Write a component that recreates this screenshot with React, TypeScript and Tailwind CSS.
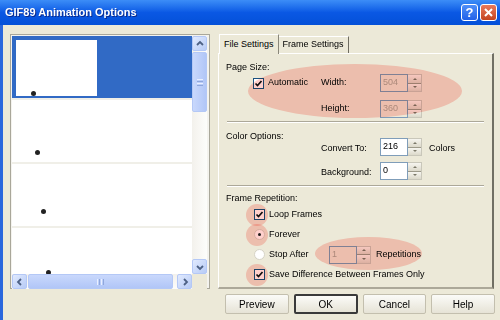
import React from "react";

const Arrow = ({ dir, color = "#4d6185" }: { dir: "up" | "down" | "left" | "right"; color?: string }) => {
  const d = {
    up: "M2 6 L5 3 L8 6",
    down: "M2 4 L5 7 L8 4",
    left: "M6 2 L3 5 L6 8",
    right: "M4 2 L7 5 L4 8",
  }[dir];
  return (
    <svg width="10" height="10" viewBox="0 0 10 10">
      <path d={d} fill="none" stroke={color} strokeWidth="1.8" />
    </svg>
  );
};

const ScrollBtn = ({ dir }: { dir: "up" | "down" | "left" | "right" }) => (
  <div className="flex h-[15px] w-[15px] items-center justify-center rounded-[2px] border border-[#b4c8f6] bg-gradient-to-br from-[#e1eafe] to-[#b7cbf6]">
    <Arrow dir={dir} />
  </div>
);

const SpinBox = ({ value, disabled }: { value: string; disabled?: boolean }) => (
  <div className="flex h-[18px]">
    <div
      className={`w-[28px] border border-[#7f9db9] px-[2px] leading-[15px] ${
        disabled ? "bg-[#ece9d8] text-[#aca899]" : "bg-white text-black"
      }`}
    >
      {value}
    </div>
    <div className="flex w-[14px] flex-col border-y border-r border-[#c9c7ba]">
      <div className="flex flex-1 items-center justify-center border-b border-[#9d9a8a] bg-gradient-to-b from-[#f6f5ef] to-[#dcd9ca]">
        <div className="h-0 w-0 border-x-[2px] border-b-[2px] border-x-transparent border-b-[#7b7868]" />
      </div>
      <div className="flex flex-1 items-center justify-center bg-gradient-to-b from-[#f6f5ef] to-[#dcd9ca]">
        <div className="h-0 w-0 border-x-[2px] border-t-[2px] border-x-transparent border-t-[#7b7868]" />
      </div>
    </div>
  </div>
);

const Check = ({ label }: { label: string }) => (
  <div className="flex h-[13px] items-center gap-[4px]">
    <div className="flex h-[11px] w-[11px] items-center justify-center border border-[#1c5180] bg-white">
      <svg width="9" height="9" viewBox="0 0 9 9">
        <path d="M1.5 4.5 L3.5 6.5 L7.5 2" fill="none" stroke="#111" strokeWidth="1.7" />
      </svg>
    </div>
    <span>{label}</span>
  </div>
);

const Radio = ({ label, on }: { label: string; on?: boolean }) => (
  <div className="flex h-[13px] items-center gap-[4px]">
    <div className="flex h-[11px] w-[11px] items-center justify-center rounded-full border border-[#d6d3c6] bg-white">
      {on && <div className="h-[3px] w-[3px] rounded-full bg-[#222]" />}
    </div>
    <span>{label}</span>
  </div>
);

const Sep = () => <div className="mx-[8px] h-[2px] border-t border-b border-t-[#aca899] border-b-white" />;

const frames = [
  { sel: true, x: 17, y: 53 },
  { sel: false, x: 21, y: 48 },
  { sel: false, x: 27, y: 43 },
  { sel: false, x: 32, y: 40 },
];

const Btn = ({ label, def }: { label: string; def?: boolean }) => (
  <button
    className={`h-[20px] w-[64px] rounded-[2px] bg-gradient-to-b from-[#fbfbf8] to-[#e6e3d6] ${
      def ? "border-2 border-[#3a3a3a]" : "border border-[#c3bfae]"
    }`}
  >
    {label}
  </button>
);

export default function App() {
  return (
    <div
      className="relative h-[320px] w-[500px] overflow-hidden bg-[#ece9d8] text-[9px] text-black"
      style={{ fontFamily: '"Liberation Sans", Arial, sans-serif' }}
    >
      {/* title bar */}
      <div className="flex h-[25px] items-center justify-between bg-gradient-to-b from-[#3c8df7] via-[#0a58e4] to-[#0450d8] pl-[5px] pr-[3px]">
        <span className="text-[11px] font-bold text-white [text-shadow:1px_1px_0_#0a2a8c]">
          GIF89 Animation Options
        </span>
        <div className="flex gap-[2px]">
          <div className="flex h-[17px] w-[17px] items-center justify-center rounded-[3px] border border-white bg-gradient-to-b from-[#4f8ff8] to-[#2160e8] text-[13px] font-bold leading-none text-white">
            ?
          </div>
          <div className="flex h-[17px] w-[17px] items-center justify-center rounded-[3px] border border-white bg-gradient-to-b from-[#e9795a] to-[#c4441f]">
            <svg width="11" height="11" viewBox="0 0 11 11">
              <path d="M2 2 L9 9 M9 2 L2 9" stroke="white" strokeWidth="2" />
            </svg>
          </div>
        </div>
      </div>

      {/* body */}
      <div className="flex h-[295px] border-l-[3px] border-[#2a67dd] pl-[7px] pt-[9px]">
        {/* frame list */}
        <div className="flex h-[255px] w-[200px] flex-col border border-[#a9a79a] bg-[#f4f3ee] p-[1px]">
          <div className="flex h-[238px]">
            <div className="w-[180px] overflow-hidden bg-white">
              {frames.map((f, i) => (
                <div
                  key={i}
                  className={`h-[64px] border-b-2 border-[#f0efe8] pl-[4px] pt-[4px] ${f.sel ? "bg-[#316ac5]" : "bg-white"}`}
                >
                  <div className="relative h-[56px] w-[81px] bg-white">
                    <div
                      className="absolute h-[5px] w-[5px] rounded-full bg-[#222]"
                      style={{ left: f.x - 2, top: f.y - 2 }}
                    />
                  </div>
                </div>
              ))}
            </div>
            <div className="flex w-[15px] flex-col bg-gradient-to-r from-[#f3f1ec] to-[#fdfdfb]">
              <ScrollBtn dir="up" />
              <div className="mt-[1px] flex h-[60px] items-center justify-center rounded-[2px] border border-[#b4c8f6] bg-gradient-to-r from-[#c9d8fc] to-[#b1c6f7]">
                <div className="flex flex-col gap-[1px]">
                  <div className="h-[1px] w-[6px] bg-[#e9efff]" />
                  <div className="h-[1px] w-[6px] bg-[#8fa7dc]" />
                  <div className="h-[1px] w-[6px] bg-[#e9efff]" />
                  <div className="h-[1px] w-[6px] bg-[#8fa7dc]" />
                </div>
              </div>
              <div className="flex-1" />
              <ScrollBtn dir="down" />
            </div>
          </div>
          <div className="flex h-[15px]">
            <div className="flex w-[180px] bg-gradient-to-b from-[#f3f1ec] to-[#fdfdfb]">
              <ScrollBtn dir="left" />
              <div className="ml-[1px] flex w-[145px] items-center justify-center rounded-[2px] border border-[#b4c8f6] bg-gradient-to-b from-[#c9d8fc] to-[#b1c6f7]">
                <div className="flex gap-[1px]">
                  <div className="h-[6px] w-[1px] bg-[#e9efff]" />
                  <div className="h-[6px] w-[1px] bg-[#8fa7dc]" />
                  <div className="h-[6px] w-[1px] bg-[#e9efff]" />
                  <div className="h-[6px] w-[1px] bg-[#8fa7dc]" />
                </div>
              </div>
              <div className="flex-1" />
              <ScrollBtn dir="right" />
            </div>
            <div className="w-[15px] bg-[#ece9d8]" />
          </div>
        </div>

        {/* settings */}
        <div className="ml-[8px] flex w-[277px] flex-col">
          <div className="flex h-[19px] items-end pl-[1px]">
            <div className="relative z-10 -mb-[1px] flex h-[20px] items-center border-l border-t border-r border-l-white border-t-white border-r-[#8a877a] bg-[#ece9d8] px-[4px]">
              File Settings
            </div>
            <div className="flex h-[17px] items-center border-t border-r border-t-white border-r-[#6f6c60] px-[4px]">
              Frame Settings
            </div>
          </div>
          <div className="flex h-[236px] w-[276px] flex-col border-l border-t border-r-2 border-b-2 border-l-white border-t-white border-r-[#716f64] border-b-[#aca899]">
            <div className="pl-[7px] pt-[7px] leading-[12px]">Page Size:</div>
            <div className="mt-[1px] flex h-[18px] items-center">
              <div className="ml-[34px] w-[68px]">
                <Check label="Automatic" />
              </div>
              <span className="w-[59px]">Width:</span>
              <SpinBox value="504" disabled />
            </div>
            <div className="mt-[8px] flex h-[18px] items-center">
              <span className="ml-[102px] w-[59px]">Height:</span>
              <SpinBox value="360" disabled />
            </div>
            <div className="mt-[3px]">
              <Sep />
            </div>
            <div className="pl-[7px] pt-[7px] leading-[12px]">Color Options:</div>
            <div className="-mt-[4px] flex h-[18px] items-center">
              <span className="ml-[102px] w-[59px] pt-[3px]">Convert To:</span>
              <SpinBox value="216" />
              <span className="ml-[7px] pt-[3px]">Colors</span>
            </div>
            <div className="mt-[6px] flex h-[18px] items-center">
              <span className="ml-[102px] w-[59px] pt-[3px]">Background:</span>
              <SpinBox value="0" />
            </div>
            <div className="mt-[5px]">
              <Sep />
            </div>
            <div className="pl-[7px] pt-[5px] leading-[12px]">Frame Repetition:</div>
            <div className="ml-[35px] mt-[4px] flex flex-col gap-[7px]">
              <Check label="Loop Frames" />
              <Radio label="Forever" on />
              <div className="flex h-[13px] items-center">
                <div className="w-[75px]">
                  <Radio label="Stop After" />
                </div>
                <SpinBox value="1" disabled />
                <span className="ml-[5px]">Repetitions</span>
              </div>
              <Check label="Save Difference Between Frames Only" />
            </div>
          </div>
          <div className="mt-[5px] flex gap-[5px] pl-[7px] text-[10px]">
            <Btn label="Preview" />
            <Btn label="OK" def />
            <Btn label="Cancel" />
            <Btn label="Help" />
          </div>
        </div>
      </div>

      {/* annotation marks */}
      <div className="pointer-events-none absolute left-[248px] top-[64px] h-[54px] w-[214px] rounded-[50%] bg-[#ffd0cc] mix-blend-multiply" />
      <div className="pointer-events-none absolute left-[246px] top-[204px] h-[22px] w-[22px] rounded-full bg-[#ffd0cc] mix-blend-multiply" />
      <div className="pointer-events-none absolute left-[246px] top-[224px] h-[22px] w-[22px] rounded-full bg-[#ffd0cc] mix-blend-multiply" />
      <div className="pointer-events-none absolute left-[246px] top-[264px] h-[22px] w-[22px] rounded-full bg-[#ffd0cc] mix-blend-multiply" />
      <div className="pointer-events-none absolute left-[315px] top-[237px] h-[33px] w-[107px] rounded-[50%] bg-[#ffd0cc] mix-blend-multiply" />
    </div>
  );
}
